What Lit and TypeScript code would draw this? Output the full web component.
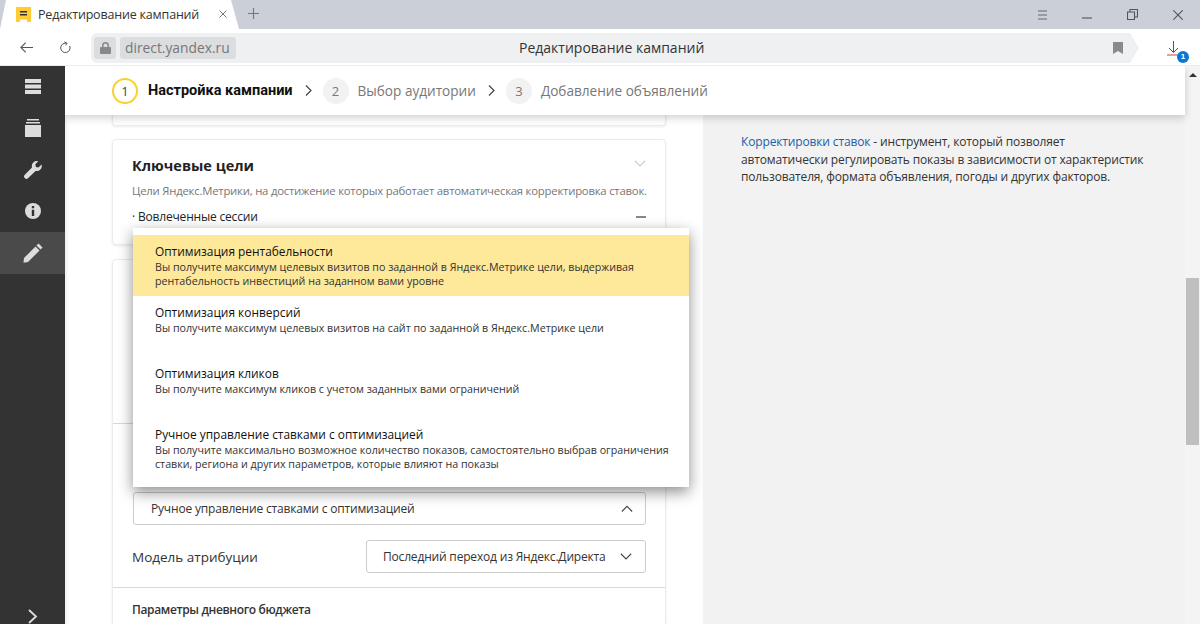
import { LitElement, html, css } from "lit";
import { customElement } from "lit/decorators.js";

const chev = (up: boolean, color = "#444", w = 12, h = 7) => html`<svg width=${w} height=${h} viewBox="0 0 14 8" fill="none" stroke=${color} stroke-width="1.300"><path d=${up ? "M1 7.500 7 1.500l6 6" : "M1 .8l6 6 6-6"}/></svg>`;

const chevRight = () => html`<svg width="7" height="11" viewBox="0 0 7 11" fill="none" stroke="#444" stroke-width="1.200"><path d="M1 .5l5 5-5 5"/></svg>`;

const options = [
  ["Оптимизация рентабельности", "Вы получите максимум целевых визитов по заданной в Яндекс.Метрике цели, выдерживая", "рентабельность инвестиций на заданном вами уровне", true],
  ["Оптимизация конверсий", "Вы получите максимум целевых визитов на сайт по заданной в Яндекс.Метрике цели", "", false],
  ["Оптимизация кликов", "Вы получите максимум кликов с учетом заданных вами ограничений", "", false],
  ["Ручное управление ставками с оптимизацией", "Вы получите максимально возможное количество показов, самостоятельно выбрав ограничения", "ставки, региона и других параметров, которые влияют на показы", false],
] as const;

@customElement("app-root")
export class AppRoot extends LitElement {
  static styles = css`
    :host { display: block; width: 1200px; height: 624px; overflow: hidden; position: relative; font-family: "Open Sans", "Noto Sans", sans-serif; color: #222; background: #fff; }
    * { box-sizing: border-box; }
    .tabbar { height: 29px; background: #cbd0d8; display: flex; align-items: stretch; position: relative; }
    .tab { width: 239px; height: 29px; background: #fff; clip-path: polygon(0 100%, 6px 0, 231px 0, 239px 100%); display: flex; align-items: center; padding: 0 0 1px 16px; gap: 7px; font-size: 12.500px; letter-spacing: -.015em; color: #333; white-space: nowrap; flex: none; }
    .tab .x { margin-left: 13px; display: flex; }
    .plus { margin: 4px 0 0 9px; display: flex; height: 19px; }
    .win { margin-left: auto; display: flex; align-items: center; }
    .win span { display: flex; width: 45px; justify-content: center; }
    .toolbar { height: 37px; display: flex; align-items: center; background: #fff; border-bottom: 1px solid #ececec; }
    .nav { display: flex; align-items: center; width: 91px; padding-left: 20px; gap: 27px; flex: none; }
    .address { flex: none; align-self: flex-start; margin-top: 4px; width: 1039px; height: 30px; background: #eff0f1; display: flex; align-items: center; padding-left: 3px; position: relative; border-radius: 6px 0 0 6px; }
    .point { flex: none; align-self: flex-start; margin-top: 4px; width: 9px; height: 30px; background: #eff0f1; clip-path: polygon(0 0, 100% 50%, 0 100%); }
    .lockbox { width: 22px; height: 22px; background: #dcdddf; border-radius: 3px; display: flex; align-items: center; justify-content: center; flex: none; }
    .host-name { margin-left: 4px; height: 22px; background: #dcdddf; border-radius: 3px; padding: 0 6px 0 5px; font-size: 13.800px; line-height: 22px; color: #777; }
    .addr-title { position: absolute; left: 428px; top: 5px; font-size: 14px; color: #333; white-space: nowrap; }
    .bm { position: absolute; right: 7px; top: 9px; display: flex; }
    .dl { position: relative; margin-left: 28px; width: 24px; height: 24px; display: flex; align-items: flex-start; }
    .dl svg { margin-top: 6px; }
    .badge { position: absolute; left: 10px; top: 16px; width: 12px; height: 12px; border-radius: 50%; background: #0a78d2; color: #fff; font-size: 8px; font-weight: 700; line-height: 12px; text-align: center; font-family: "Liberation Sans", sans-serif; }
    .body { height: 558px; display: grid; grid-template-columns: 65px 638px 482px 15px; position: relative; overflow: hidden; }
    .side { background: #333; display: flex; flex-direction: column; position: relative; z-index: 3; }
    .side .it { height: 41.500px; display: flex; align-items: center; justify-content: center; flex: none; }
    .side .it.on { background: #4a4a4a; height: 42px; }
    .side .grow { flex: 1; }
    .side .foot { height: 15px; padding-left: 28px; display: flex; align-items: flex-start; }
    .center { background: #fff; padding: 0 37px 0 47px; position: relative; overflow: hidden; box-shadow: inset 4px 0 4px -3px rgba(0,0,0,.1); }
    .card { border: 1px solid #ececec; border-radius: 4px; box-shadow: 0 1px 3px rgba(0,0,0,.08); background: #fff; }
    .stub { height: 28px; margin-top: 32px; border-radius: 0 0 4px 4px; border-top: 0; }
    .goals { height: 106px; margin-top: 13px; padding: 16px 19px 0; position: relative; }
    .goals h3 { margin: 0; font-size: 14.500px; line-height: 20px; font-weight: 700; color: #222; }
    .goals p { margin: 7px 0 0; font-size: 11.350px; line-height: 16px; color: #777; white-space: nowrap; letter-spacing: -.02em; }
    .goal { margin-top: 9px; font-size: 12px; letter-spacing: -.015em; line-height: 18px; display: flex; justify-content: space-between; }
    .dash { width: 10px; height: 1.500px; background: #888; align-self: center; }
    .goals .arrow { position: absolute; right: 19px; top: 20px; display: flex; }
    .strategy { margin-top: 14px; height: 400px; display: flex; flex-direction: column; }
    .rule { height: 1px; background: #d8d8d8; flex: none; }
    .r1 { margin-top: 163px; }
    .sel { height: 33px; border: 1px solid #ccc; border-radius: 3px; display: flex; align-items: center; justify-content: space-between; padding: 0 12px 0 17px; font-size: 12px; letter-spacing: -.015em; color: #333; background: #fff; white-space: nowrap; }
    .sel.full { margin: 68px 19px 0 20px; }
    .row { display: flex; justify-content: space-between; align-items: center; margin: 15px 19px 0 19px; }
    .row label { font-size: 13.500px; color: #333; }
    .row .sel { width: 280px; padding: 0 13px 0 16px; }
    .r2 { margin-top: 14px; }
    .budget { padding: 13px 19px; font-size: 12px; letter-spacing: -.03em; line-height: 18px; font-weight: 600; color: #333; }
    .right { background: #f2f2f2; padding: 67px 0 0 38px; font-size: 12px; letter-spacing: -.012em; line-height: 17.500px; color: #333; }
    .right a { color: #1b5fa8; text-decoration: none; }
    .right p { margin: 0; width: 410px; }
    .scroll { background: #f4f4f4; position: relative; }
    .up { position: absolute; top: 7px; left: 4px; width: 0; height: 0; border: 4px solid transparent; border-top: 0; border-bottom: 4px solid #333; }
    .thumb { margin-top: 212px; margin-left: 1px; width: 13px; height: 167px; background: #bfbfbf; }
    .steps { position: absolute; left: 65px; top: 0; width: 1120px; height: 49px; background: #fff; box-shadow: 0 3px 8px rgba(0,0,0,.18); z-index: 2; display: flex; align-items: center; padding-left: 47px; font-size: 13.600px; color: #777; white-space: nowrap; }
    .num { width: 26px; height: 26px; border-radius: 50%; background: #f2f2f2; color: #777; display: flex; align-items: center; justify-content: center; font-size: 13px; flex: none; }
    .num.cur { background: #fff; border: 2px solid #f7d22c; color: #444; margin-right: 10px; }
    .steps b { color: #111; font-size: 14.500px; font-family: Roboto, "Open Sans", sans-serif; font-weight: 700; }
    .steps .sep { margin: 0 11px 0 12px; display: flex; }
    .steps .t { margin-left: 9px; }
    .popup { position: absolute; left: 133px; top: 162px; width: 556px; height: 259px; background: #fff; z-index: 1; box-shadow: 0 5px 14px rgba(0,0,0,.45); padding-top: 7px; }
    .opt { padding: 8px 20px 0 22px; height: 61px; white-space: nowrap; }
    .opt.on { background: #fee89a; }
    .opt div { font-size: 11.900px; line-height: 17px; color: #111; }
    .opt small { display: block; font-size: 10.700px; line-height: 14px; color: #333; }
  `;

  render() {
    return html`
      <div class="tabbar">
        <div class="tab">
          <svg width="15" height="15" viewBox="0 0 15 15"><path fill="#fc3" d="M0 0h15v15h-3.500l-1-2.500h-6l-1 2.500H0z"/><path fill="#333" d="M4 4h7v1.500H4zM4 7h7v1.500H4z"/></svg>
          <span>Редактирование кампаний</span>
          <span class="x"><svg width="8" height="8" viewBox="0 0 8 8" stroke="#777" stroke-width="1"><path d="M.5.5l7 7M7.500.5l-7 7"/></svg></span>
        </div>
        <span class="plus"><svg width="11" height="11" viewBox="0 0 11 11" stroke="#777" stroke-width="1.100" style="margin-top:4px"><path d="M5.500 0v11M0 5.500h11"/></svg></span>
        <div class="win">
          <span><svg width="11" height="10" viewBox="0 0 11 10" stroke="#666" stroke-width="1.100"><path d="M1 1h9M1 5h9M1 9h9"/></svg></span>
          <span><svg width="11" height="10" viewBox="0 0 11 10" stroke="#666" stroke-width="1.300" style="margin-top:7px"><path d="M0 5h10"/></svg></span>
          <span><svg width="11" height="11" viewBox="0 0 11 11" fill="none" stroke="#555" stroke-width="1.100"><path d="M.5 3h7v7.500h-7z"/><path d="M3 3V.5h7.500V8H8"/></svg></span>
          <span><svg width="10" height="10" viewBox="0 0 10 10" stroke="#555" stroke-width="1.100"><path d="M.3.3l9.400 9.400M9.700.3L.3 9.700"/></svg></span>
        </div>
      </div>
      <div class="toolbar">
        <div class="nav">
          <svg width="13" height="11" viewBox="0 0 13 11" fill="none" stroke="#555" stroke-width="1.100"><path d="M13 5.500H1M5.700.7l-4.800 4.800 4.800 4.800"/></svg>
          <svg width="11" height="12" viewBox="0 0 11 12" fill="none" stroke="#555" stroke-width="1"><path d="M9.700 5a4.700 4.700 0 1 1-3.600-2.800L4.700.7"/><path d="M4.700 1l2.400 1.300-1.500 2"/></svg>
        </div>
        <div class="address">
          <span class="lockbox"><svg width="11" height="12" viewBox="0 0 11 12"><path fill="#888" d="M1 5h9a1 1 0 0 1 1 1v5a1 1 0 0 1-1 1H1a1 1 0 0 1-1-1V6a1 1 0 0 1 1-1z"/><path fill="none" stroke="#888" stroke-width="1.500" d="M2.800 5.500V3.500a2.700 2.700 0 0 1 5.400 0v2"/></svg></span>
          <span class="host-name">direct.yandex.ru</span>
          <span class="addr-title">Редактирование кампаний</span>
          <span class="bm"><svg width="10" height="12" viewBox="0 0 10 12"><path fill="#8a8a8a" d="M0 0h10v12L5 9 0 12z"/></svg></span>
        </div>
        <div class="point"></div>
        <div class="dl">
          <svg width="13" height="15" viewBox="0 0 13 15" fill="none" stroke="#555" stroke-width="1"><path d="M6.500 0v11M2 7l4.500 4.500L11 7"/><path d="M0 14h12" stroke="#c44"/></svg>
          <span class="badge">1</span>
        </div>
      </div>
      <div class="body">
        <aside class="side">
          <div class="it"><svg width="16" height="15" viewBox="0 0 16 15" fill="#ddd"><path d="M0 0h16v4H0zM0 5.500h16v4H0zM0 11h16v4H0z"/></svg></div>
          <div class="it"><svg width="16" height="18" viewBox="0 0 16 18" fill="#ddd"><path d="M2 0h12v1.500H2zM1 3h14v1.500H1zM0 6h16v12H0z"/></svg></div>
          <div class="it"><svg width="18" height="18" viewBox="0 0 18 18"><path fill="#ddd" d="M17.500 3.500l-3 3-2.600-.6-.6-2.600 3-3A5 5 0 0 0 8 6.500L.8 13.700a2.400 2.400 0 0 0 3.400 3.400l7.400-7.200a5 5 0 0 0 5.900-6.400z"/></svg></div>
          <div class="it"><svg width="16" height="16" viewBox="0 0 16 16"><circle cx="8" cy="8" r="8" fill="#ddd"/><path fill="#333" d="M6.800 3h2.400v2.300H6.800zM6.800 6.800h2.400V13H6.800z"/></svg></div>
          <div class="it on"><svg width="20" height="20" viewBox="0 0 20 20"><path fill="#ddd" d="M15.500 0.500l4 4-2 2-4-4zM12.500 3.500l4 4L5 19l-4.500.8L1 15z"/></svg></div>
          <div class="grow"></div>
          <div class="foot"><svg width="10" height="15" viewBox="0 0 10 15" fill="none" stroke="#ddd" stroke-width="1.800"><path d="M1 1l7 6.500L1 14"/></svg></div>
        </aside>
        <main class="center">
          <div class="card stub"></div>
          <section class="card goals">
            <h3>Ключевые цели</h3>
            <span class="arrow">${chev(false, "#ccc")}</span>
            <p>Цели Яндекс.Метрики, на достижение которых работает автоматическая корректировка ставок.</p>
            <div class="goal"><span>· Вовлеченные сессии</span><span class="dash"></span></div>
          </section>
          <section class="card strategy">
            <div class="rule r1"></div>
            <div class="sel full"><span>Ручное управление ставками с оптимизацией</span>${chev(true)}</div>
            <div class="row">
              <label>Модель атрибуции</label>
              <div class="sel"><span>Последний переход из Яндекс.Директа</span>${chev(false)}</div>
            </div>
            <div class="rule r2"></div>
            <div class="budget">Параметры дневного бюджета</div>
          </section>
        </main>
        <aside class="right">
          <p><a>Корректировки ставок</a> - инструмент, который позволяет автоматически регулировать показы в зависимости от характеристик пользователя, формата объявления, погоды и других факторов.</p>
        </aside>
        <div class="scroll"><span class="up"></span><div class="thumb"></div></div>
        <div class="steps">
          <span class="num cur">1</span><b>Настройка кампании</b>
          <span class="sep">${chevRight()}</span>
          <span class="num">2</span><span class="t">Выбор аудитории</span>
          <span class="sep">${chevRight()}</span>
          <span class="num">3</span><span class="t">Добавление объявлений</span>
        </div>
        <div class="popup">
          ${options.map(o => html`<div class="opt ${o[3] ? "on" : ""}"><div>${o[0]}</div><small>${o[1]}</small>${o[2] ? html`<small>${o[2]}</small>` : ""}</div>`)}
        </div>
      </div>
    `;
  }
}
